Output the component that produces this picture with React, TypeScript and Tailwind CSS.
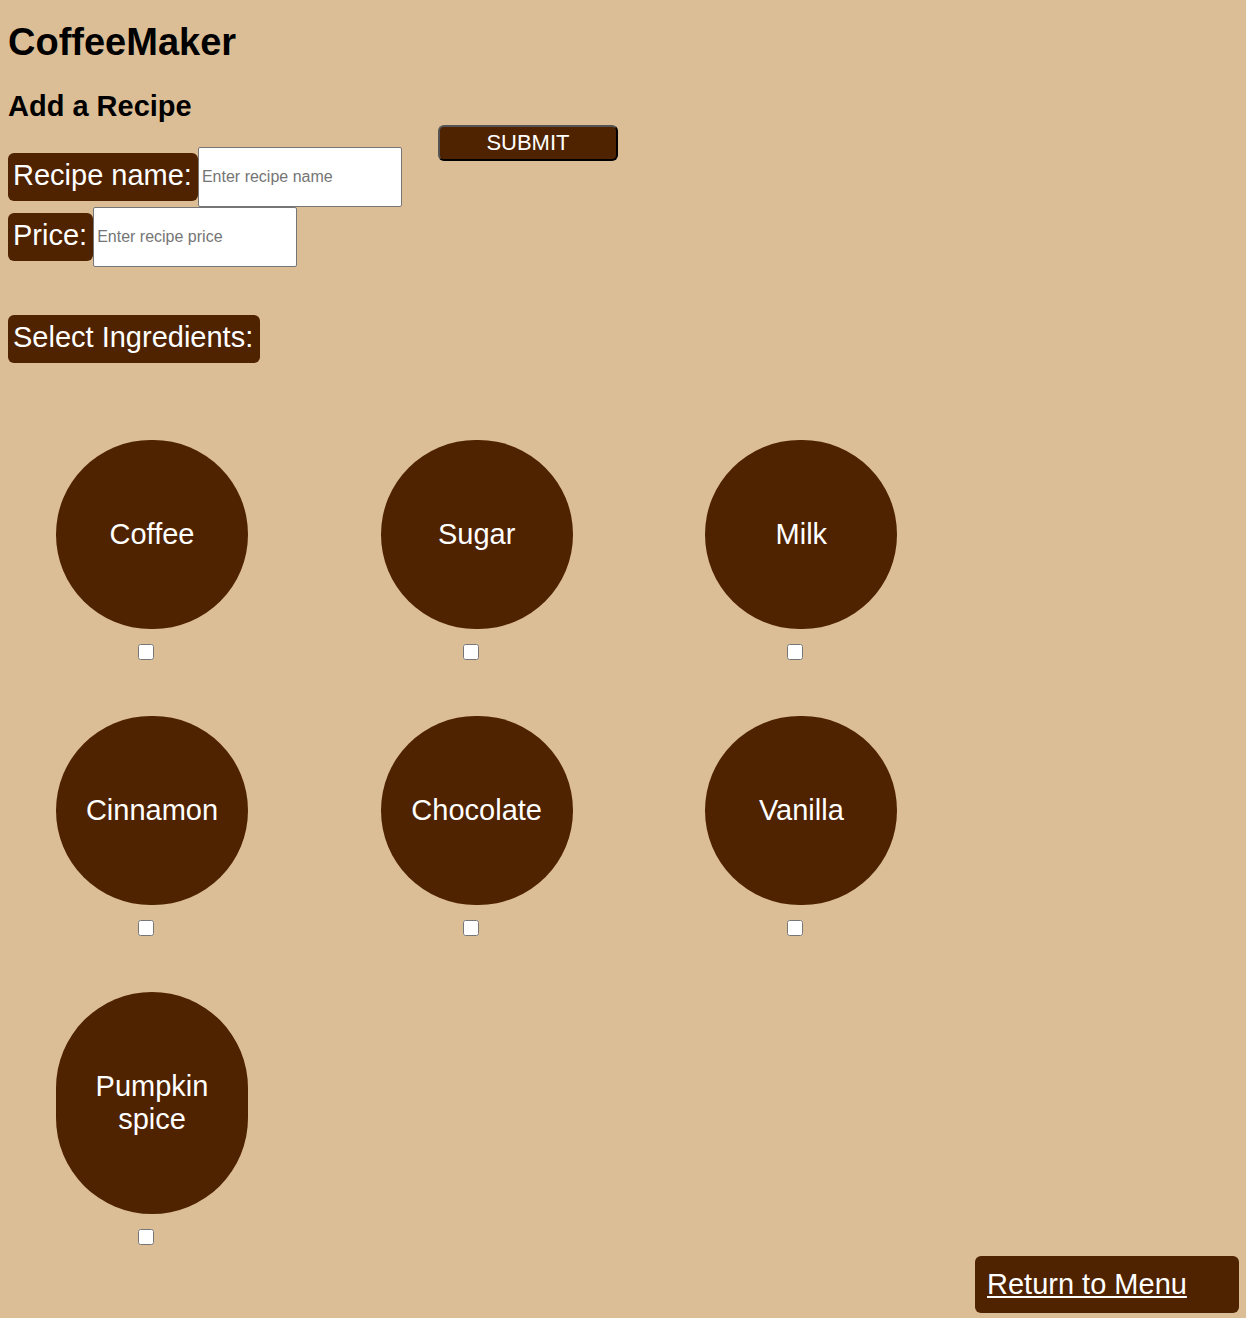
const ingredients = ["Coffee", "Sugar", "Milk", "Cinnamon", "Chocolate", "Vanilla", "Pumpkin spice"];

const tag = "w-fit rounded-md bg-[#4f2200] pt-1 pb-2 pl-[5px] text-white leading-9";
const field =
  "h-[60px] w-[204px] rounded-[2px] border border-[#767676] bg-white px-[3px] text-[16px] text-black placeholder:text-[#757575]";

export default function App() {
  return (
    <main className="flex min-h-screen flex-col bg-[#dcbe96] pl-2 font-['Liberation_Sans',Arial,sans-serif] text-[29px] text-black">
      <h1 className="mt-5 text-[38px] leading-[44px] font-bold">CoffeeMaker</h1>
      <h2 className="mt-[26px] text-[29px] leading-[33px] font-bold">Add a Recipe</h2>
      <form className="mt-[2px]" onSubmit={(e) => e.preventDefault()}>
        <div className="flex items-start gap-9">
          <div className="mt-[22px]">
            <div className="flex items-center">
              <label htmlFor="name" className={`${tag} pr-[6px]`}>Recipe name:</label>
              <input id="name" type="text" placeholder="Enter recipe name" className={field} />
            </div>
            <div className="flex items-center">
              <label htmlFor="price" className={`${tag} pr-[6px]`}>Price:</label>
              <input id="price" type="text" placeholder="Enter recipe price" className={field} />
            </div>
          </div>
          <button type="submit" className="h-9 w-[180px] rounded-md border-2 border-black bg-[#4f2200] text-[22px] leading-7 text-white [border-style:outset]">
            SUBMIT
          </button>
        </div>
        <fieldset className="mt-12">
          <legend className={`${tag} pr-[7px]`}>Select Ingredients:</legend>
          <div className="mt-[77px] mr-[216px] ml-12 grid grid-cols-3 gap-y-14">
            {ingredients.map((name) => (
              <div key={name} className="flex w-48 flex-col items-center">
                <label htmlFor={name} className="w-full rounded-[96px] bg-[#4f2200] px-6 py-[78px] text-center leading-[33px] text-white">
                  {name}
                </label>
                <input id={name} type="checkbox" className="mt-[15px] mr-3 size-4" />
              </div>
            ))}
          </div>
        </fieldset>
      </form>
      <a href="#menu" className="mt-auto mr-[7px] mb-[5px] w-[264px] self-end rounded-md bg-[#4f2200] px-3 py-3 leading-[33px] text-white underline">
        Return to Menu
      </a>
    </main>
  );
}
